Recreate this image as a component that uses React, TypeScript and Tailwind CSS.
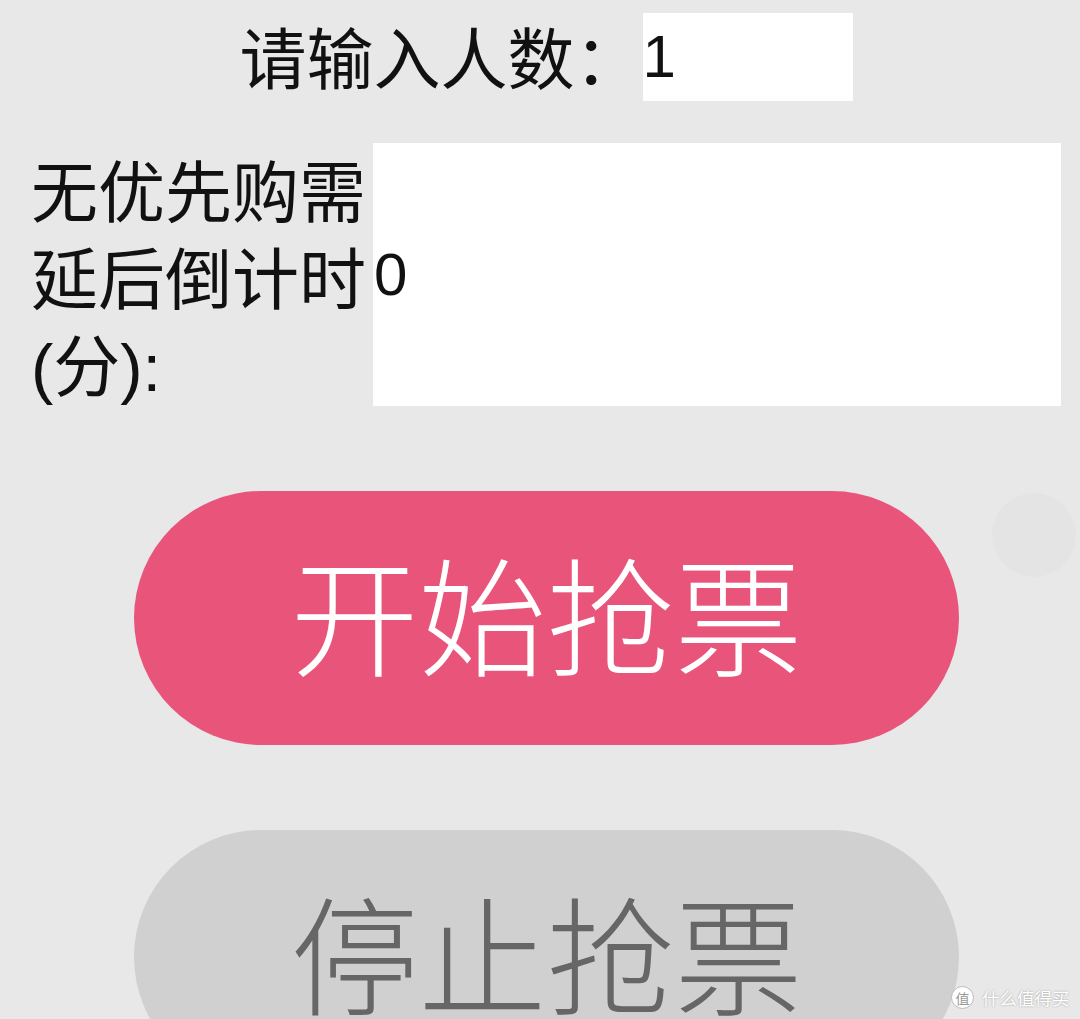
import React from "react";

export default function App() {
  const font = "[font-family:'Liberation_Sans','Noto_Sans_CJK_SC',sans-serif]";
  return (
    <div className={`relative min-h-screen w-full overflow-hidden bg-[#e8e8e8] ${font}`}>
      <div className="pl-[31px] pr-[19px] pt-[13px]">
        {/* row 1 */}
        <div className="flex items-center justify-center">
          <span className="translate-y-[4px] text-[67px] leading-[88px] text-[#111]">请输入人数：</span>
          <input
            readOnly
            defaultValue="1"
            className="ml-[1px] h-[88px] w-[210px] bg-white p-0 text-[60px] text-[#111] outline-none [font-family:'Liberation_Sans',sans-serif]"
          />
        </div>

        {/* row 2 */}
        <div className="mt-[42px] flex items-center">
          <div className="w-[342px] shrink-0 translate-y-[6px] text-[67px] leading-[87px] text-[#111]">
            无优先购需延后倒计时(分):
          </div>
          <input
            readOnly
            defaultValue="0"
            className="h-[263px] min-w-0 flex-1 bg-white p-0 pl-[1px] text-[60px] text-[#111] outline-none [font-family:'Liberation_Sans',sans-serif]"
          />
        </div>

        {/* buttons */}
        <div className="mt-[85px] flex flex-col items-center gap-[85px] pl-[1px]">
          <button className="flex h-[254px] w-[825px] items-center justify-center rounded-full bg-[#e9557a] pt-[10px] text-[128px] font-light leading-none text-white">
            开始抢票
          </button>
          <button className="flex h-[254px] w-[825px] items-center justify-center rounded-full bg-[#d0d0d0] pt-[10px] text-[128px] font-light leading-none text-[#666]">
            停止抢票
          </button>
        </div>
      </div>

      {/* faint floating circle */}
      <div className="absolute left-[992px] top-[493px] h-[84px] w-[84px] rounded-full bg-[#e4e4e4]" />

      {/* watermark */}
      <div className="absolute left-[951px] top-[986px] flex items-center gap-[8px]">
        <div className="flex h-[23px] w-[23px] items-center justify-center rounded-full border border-[#bbb] bg-white text-[14px] leading-none text-[#999] [font-family:'Noto_Sans_CJK_SC',sans-serif]">
          值
        </div>
        <span className="text-[17.5px] leading-none text-white [font-family:'Noto_Sans_CJK_SC',sans-serif] [text-shadow:0_0_2px_rgba(0,0,0,0.35)]">
          什么值得买
        </span>
      </div>
    </div>
  );
}
